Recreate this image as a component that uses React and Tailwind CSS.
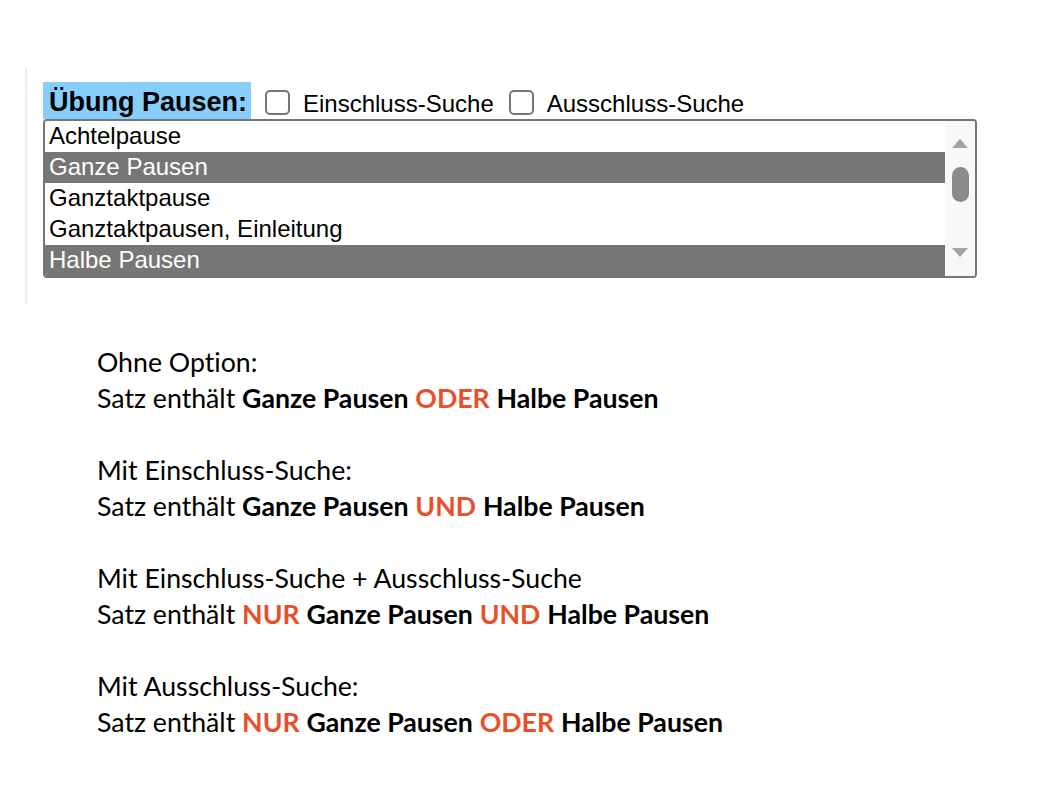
import React from 'react'

const OPTIONS = [
    { label: 'Achtelpause', selected: false },
    { label: 'Ganze Pausen', selected: true },
    { label: 'Ganztaktpause', selected: false },
    { label: 'Ganztaktpausen, Einleitung', selected: false },
    { label: 'Halbe Pausen', selected: true },
]

function Box() {
    return <span className="inline-block w-[25px] h-[25px] rounded-[5px] border-2 border-[#767676] bg-white shrink-0" />
}

const Red = ({ children }) => <span className="font-bold text-[#e8502b]">{children}</span>
const B = ({ children }) => <span className="font-bold">{children}</span>

export default function App() {
    return (
        <div className="w-[1046px] h-[807px] bg-white text-black overflow-hidden">
            {/* Form panel */}
            <div className="ml-[25px] mt-[69px] h-[236px] border-l-2 border-[#ececec] pl-[16px] pt-[13px]" style={{ fontFamily: '"Liberation Sans", Arial, sans-serif' }}>
                <div className="flex items-center h-[37px]">
                    <span className="h-[37px] w-[208px] bg-[#87cefa] font-bold text-[27px] pl-[6px] leading-[40px] whitespace-nowrap">Übung Pausen:</span>
                    <span className="ml-[14px] flex items-center mt-[4px]"><Box /></span>
                    <span className="ml-[13px] text-[24px] mt-[6px]">Einschluss-Suche</span>
                    <span className="ml-[15px] flex items-center mt-[4px]"><Box /></span>
                    <span className="ml-[13px] text-[24px] mt-[6px]">Ausschluss-Suche</span>
                </div>
                <div className="w-[934px] h-[159px] border-2 border-[#767676] rounded-[4px] flex overflow-hidden">
                    <div className="flex-1 flex flex-col">
                        {OPTIONS.map(o => (
                            <div key={o.label}
                                className={`h-[31px] pl-[4px] text-[24px] leading-[29px] ${o.selected ? 'bg-[#767676] text-white' : 'bg-white'}`}>
                                {o.label}
                            </div>
                        ))}
                    </div>
                    <div className="w-[30px] bg-[#f8f8f8] flex flex-col items-center pt-[18px]">
                        <svg width="16" height="9" viewBox="0 0 16 9"><path d="M0 9 L8 0 L16 9 Z" fill="#a3a3a3" /></svg>
                        <div className="mt-[19px] w-[17px] h-[35px] rounded-full bg-[#8b8b8b]" />
                        <div className="flex-1" />
                        <svg width="16" height="9" viewBox="0 0 16 9" className="mb-[19px]"><path d="M0 0 L16 0 L8 9 Z" fill="#a3a3a3" /></svg>
                    </div>
                </div>
            </div>

            {/* Explanation */}
            <div className="ml-[97px] mt-[39px] text-[26.7px] leading-[36px] [font-variant-ligatures:none]" style={{ fontFamily: 'Lato, "Open Sans", sans-serif' }}>
                <p>Ohne Option:</p>
                <p>Satz enthält <B>Ganze Pausen</B> <Red>ODER</Red> <B>Halbe Pausen</B></p>
                <p>&nbsp;</p>
                <p>Mit Einschluss-Suche:</p>
                <p>Satz enthält <B>Ganze Pausen</B> <Red>UND</Red> <B>Halbe Pausen</B></p>
                <p>&nbsp;</p>
                <p>Mit Einschluss-Suche + Ausschluss-Suche</p>
                <p>Satz enthält <Red>NUR</Red> <B>Ganze Pausen</B> <Red>UND</Red> <B>Halbe Pausen</B></p>
                <p>&nbsp;</p>
                <p>Mit Ausschluss-Suche:</p>
                <p>Satz enthält <Red>NUR</Red> <B>Ganze Pausen</B> <Red>ODER</Red> <B>Halbe Pausen</B></p>
            </div>
        </div>
    )
}
